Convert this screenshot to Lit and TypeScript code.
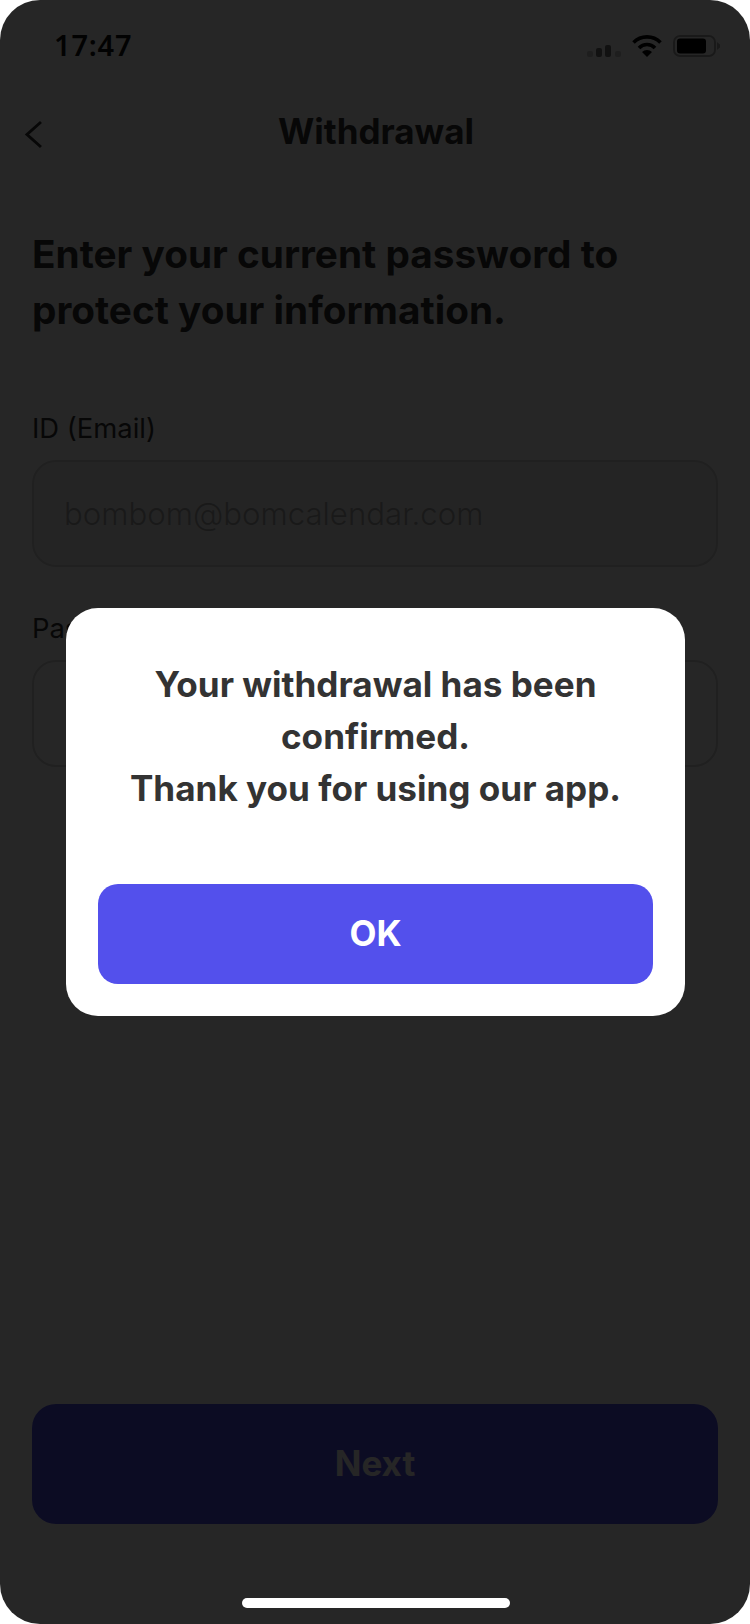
import { LitElement, html, css } from "lit";
import { customElement } from "lit/decorators.js";

@customElement("app-root")
export class AppRoot extends LitElement {
  static styles = css`
    :host { display: block; width: 750px; height: 1624px; background: #fff; font-family: Inter, "Liberation Sans", sans-serif; }
    .phone { position: relative; width: 750px; height: 1624px; border-radius: 40px; overflow: hidden; background: #fff; display: flex; flex-direction: column; box-sizing: border-box; }
    .status { height: 88px; flex: none; display: flex; align-items: center; justify-content: space-between; box-sizing: border-box; padding: 0 30px 0 54px; }
    .time { font-family: "Noto Sans", sans-serif; font-weight: 600; font-size: 29px; color: #111; letter-spacing: 0.8px; }
    .icons { display: flex; align-items: center; gap: 11px; margin-top: 4px; }
    .icons svg { display: block; }
    .icons .signal { margin-top: 9px; }
    .nav { height: 88px; flex: none; position: relative; display: flex; align-items: center; justify-content: center; box-sizing: border-box; padding: 0 0 2px 2px; }
    .back { position: absolute; left: 24px; top: 32px; display: block; }
    .nav h1 { margin: 0; font-size: 35px; font-weight: 700; color: #333; }
    .body { flex: 1; display: flex; flex-direction: column; padding: 50px 32px 100px; }
    h2 { margin: 0; font-size: 38.75px; line-height: 56px; font-weight: 700; color: #333; }
    .form { margin-top: 70px; display: flex; flex-direction: column; gap: 41px; }
    .field { display: flex; flex-direction: column; gap: 12px; }
    label { font-size: 27.4px; line-height: 40px; color: #333; }
    .input { height: 107px; box-sizing: border-box; border: 2px solid #d4d4d4; border-radius: 24px; display: flex; align-items: center; padding: 0 30px; font-weight: 300; font-size: 31.2px; color: #aaa; background: #f2f2f2; }
    .input.plain { background: #fff; }
    .next { margin-top: auto; height: 120px; flex: none; border-radius: 24px; background: #5350ec; color: #fff; display: flex; align-items: center; justify-content: center; font-size: 35px; font-weight: 700; padding-bottom: 2px; box-sizing: border-box; }
    .overlay { position: absolute; inset: 0; padding-left: 1px; background: rgba(0, 0, 0, 0.85); display: flex; align-items: center; justify-content: center; }
    .dialog { width: 619px; height: 408px; box-sizing: border-box; background: #fff; border-radius: 32px; padding: 50px 32px 32px; display: flex; flex-direction: column; }
    .msg { font-size: 35.1px; font-weight: 700; line-height: 52px; color: #333; text-align: center; }
    .ok { margin-top: auto; height: 100px; box-sizing: border-box; padding-bottom: 2px; border-radius: 20px; background: #5350ec; color: #fff; display: flex; align-items: center; justify-content: center; font-size: 35px; font-weight: 700; }
    .home { position: absolute; left: 242px; bottom: 16px; width: 268px; height: 10px; border-radius: 5px; background: #fff; }
  `;

  render() {
    return html`
      <div class="phone">
        <div class="status">
          <span class="time">17:47</span>
          <div class="icons">
            <svg class="signal" width="34" height="12" viewBox="0 0 34 12">
              <rect x="0" y="6" width="6" height="6" rx="2" fill="#c8c8c8"></rect>
              <rect x="9" y="3" width="6" height="9" rx="2" fill="#707070"></rect>
              <rect x="18" y="0" width="6" height="12" rx="2" fill="#707070"></rect>
              <rect x="28" y="6" width="6" height="6" rx="2" fill="#c8c8c8"></rect>
            </svg>
            <svg width="30" height="22" viewBox="0 0 30 22">
              <path d="M1.5 7.5 A19 19 0 0 1 28.5 7.5" fill="none" stroke="#000" stroke-width="3.6"></path>
              <path d="M7 13 A11 11 0 0 1 23 13" fill="none" stroke="#000" stroke-width="3.6"></path>
              <path d="M10 17 L15 22 L20 17 A7 7 0 0 0 10 17 Z" fill="#000"></path>
            </svg>
            <svg width="47" height="22" viewBox="0 0 47 22">
              <rect x="1" y="1" width="41" height="20" rx="6" fill="none" stroke="#aaa" stroke-width="2"></rect>
              <rect x="4" y="3.5" width="29" height="15" rx="3" fill="#000"></rect>
              <path d="M44 7 L47 9.5 V12.5 L44 15 Z" fill="#aaa"></path>
            </svg>
          </div>
        </div>
        <div class="nav">
          <svg class="back" width="20" height="30" viewBox="0 0 20 30"><path d="M17 2 L3 14.5 L17 27" fill="none" stroke="#333" stroke-width="3"></path></svg>
          <h1>Withdrawal</h1>
        </div>
        <div class="body">
          <h2>Enter your current password to<br />protect your information.</h2>
          <div class="form">
            <div class="field">
              <label>ID (Email)</label>
              <div class="input">bombom@bomcalendar.com</div>
            </div>
            <div class="field">
              <label>Password</label>
              <div class="input plain"></div>
            </div>
          </div>
          <div class="next">Next</div>
        </div>
        <div class="overlay">
          <div class="dialog">
            <div class="msg">Your withdrawal has been<br />confirmed.<br />Thank you for using our app.</div>
            <div class="ok">OK</div>
          </div>
        </div>
        <div class="home"></div>
      </div>
    `;
  }
}
